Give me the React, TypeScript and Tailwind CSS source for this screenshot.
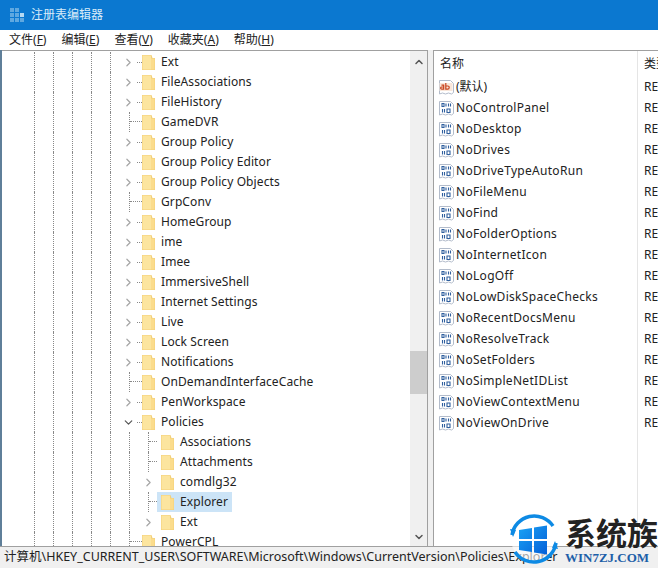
import { ChevronRight, ChevronDown, ChevronUp } from "lucide-react";

const menus = [
    { label: "文件", key: "F" },
    { label: "编辑", key: "E" },
    { label: "查看", key: "V" },
    { label: "收藏夹", key: "A" },
    { label: "帮助", key: "H" },
];

// kind: c = collapsed, o = open, n = no children
const tree = [
    { name: "Ext", kind: "c", level: 0 },
    { name: "FileAssociations", kind: "c", level: 0 },
    { name: "FileHistory", kind: "c", level: 0 },
    { name: "GameDVR", kind: "n", level: 0 },
    { name: "Group Policy", kind: "c", level: 0 },
    { name: "Group Policy Editor", kind: "c", level: 0 },
    { name: "Group Policy Objects", kind: "c", level: 0 },
    { name: "GrpConv", kind: "n", level: 0 },
    { name: "HomeGroup", kind: "c", level: 0 },
    { name: "ime", kind: "c", level: 0 },
    { name: "Imee", kind: "c", level: 0 },
    { name: "ImmersiveShell", kind: "c", level: 0 },
    { name: "Internet Settings", kind: "c", level: 0 },
    { name: "Live", kind: "c", level: 0 },
    { name: "Lock Screen", kind: "c", level: 0 },
    { name: "Notifications", kind: "c", level: 0 },
    { name: "OnDemandInterfaceCache", kind: "n", level: 0 },
    { name: "PenWorkspace", kind: "c", level: 0 },
    { name: "Policies", kind: "o", level: 0 },
    { name: "Associations", kind: "n", level: 1 },
    { name: "Attachments", kind: "n", level: 1 },
    { name: "comdlg32", kind: "c", level: 1 },
    { name: "Explorer", kind: "n", level: 1, selected: true },
    { name: "Ext", kind: "c", level: 1 },
    { name: "PowerCPL", kind: "n", level: 0 },
];

const values = [
    "NoControlPanel",
    "NoDesktop",
    "NoDrives",
    "NoDriveTypeAutoRun",
    "NoFileMenu",
    "NoFind",
    "NoFolderOptions",
    "NoInternetIcon",
    "NoLogOff",
    "NoLowDiskSpaceChecks",
    "NoRecentDocsMenu",
    "NoResolveTrack",
    "NoSetFolders",
    "NoSimpleNetIDList",
    "NoViewContextMenu",
    "NoViewOnDrive",
];

function Folder() {
    return (
        <svg width="13" height="16" viewBox="0 0 13 16" className="shrink-0">
            <path d="M0 1h9.5l1 3H13v12H0z" fill="#f3cf78" />
            <path d="M0.5 1.5h8.5v14H0.5z" fill="#fce59f" />
            <path d="M9 4.5h3.5v11H9z" fill="#fbdc8c" />
        </svg>
    );
}

function RegIcon({ text }: { text: boolean }) {
    return (
        <svg width="15" height="16" viewBox="0 0 15 16" className="shrink-0">
            <path d="M0.5 1.5h11l3 3v9l-2 1.5-3-1-3 1-3-1-3 1z" fill="#fff" stroke="#b3bccb" />
            {text ? (
                <>
                    <rect x="0.5" y="4" width="13" height="8" fill="#f8e6da" />
                    <path d="M2.5 6.2h2.2v4h-2q-1 0-1-1.1t1-1.1h2M6.8 4v6.2h2q1.4 0 1.4-1.6t-1.4-1.6h-2" fill="none" stroke="#c8421c" strokeWidth="1.2" />
                </>
            ) : (
                <>
                    <path d="M3 3.5h2v3h-2zM7 3.5v3M9.5 3.5v3M11.5 3.5v3" fill="none" stroke="#2f5f9e" strokeWidth="1.1" />
                    <path d="M3.5 9v3.5M5.5 9v3.5M8 9h3v3.5h-3z" fill="none" stroke="#2f5f9e" strokeWidth="1.1" />
                </>
            )}
        </svg>
    );
}

function Logo() {
    return (
        <svg width="50" height="50" viewBox="0 0 50 50" className="shrink-0">
            <defs>
                <linearGradient id="tile" x1="0" y1="0" x2="1" y2="1">
                    <stop offset="0" stopColor="#1aa3f5" />
                    <stop offset="1" stopColor="#0560d8" />
                </linearGradient>
            </defs>
            <circle cx="25" cy="25" r="23" fill="#fff" fillOpacity="0.6" />
            <path d="M3 21A22.500 22.500 0 0 1 44 12" fill="none" stroke="#0d8ae4" strokeWidth="3.5" />
            <path d="M47 29A22.500 22.500 0 0 1 6 38" fill="none" stroke="#0d8ae4" strokeWidth="3.5" />
            <path d="M1 15l6 1-3 7zM49 35l-6-1 3-7z" fill="#0d8ae4" />
            <path d="M10 16l13-2v11h-13zM25 13.500l13-2v13.500h-13zM10 27h13v11l-13-2zM25 27h13v13.500l-13-2z" fill="url(#tile)" />
        </svg>
    );
}

export default function App() {
    return (
        <div className="relative flex h-[568px] w-[658px] flex-col overflow-hidden bg-white font-['Noto_Sans','Noto_Sans_CJK_SC',sans-serif] text-[12px] text-[#222]">
            {/* Title bar */}
            <div className="flex h-[30px] shrink-0 items-center gap-[7px] bg-[#0b78d0] pl-[10px] text-white">
                <div className="grid grid-cols-3 gap-px">
                    <span className="h-1 w-1 bg-[#5fa8e0]" />
                    <span className="h-1 w-1 bg-[#5fa8e0]" />
                    <span className="h-1 w-1 bg-[#0b78d0]" />
                    <span className="h-1 w-1 bg-[#5fa8e0]" />
                    <span className="h-1 w-1 bg-[#5fa8e0]" />
                    <span className="h-1 w-1 bg-[#b5d9f3]" />
                    <span className="h-1 w-1 bg-[#5fa8e0]" />
                    <span className="h-1 w-1 bg-[#5fa8e0]" />
                    <span className="h-1 w-1 bg-[#5fa8e0]" />
                </div>
                <span className="text-[12px] text-[#d9ecf9]">注册表编辑器</span>
            </div>

            {/* Menu */}
            <div className="flex h-[20px] shrink-0 items-center bg-white pl-[9px] text-[12px]">
                {menus.map((m) => (
                    <span key={m.key} className="mr-[15px] whitespace-nowrap">
                        {m.label}(<span className="underline">{m.key}</span>)
                    </span>
                ))}
            </div>

            {/* Panels */}
            <div className="flex min-h-0 flex-1 border-l-2 border-[#5f7f99] bg-[#f0f0f0]">
                <div className="flex w-[426px] shrink-0 border-t border-r border-[#a0a0a0] bg-white">
                    <div className="min-w-0 flex-1 overflow-hidden pt-px">
                        {tree.map((row, i) => (
                            <div key={i} className="flex h-5 items-center">
                                {/* dotted guide lines */}
                                <div className="flex h-full w-[120px] shrink-0 pl-[32px]">
                                    {[0, 1, 2, 3, 4].map((g) => (
                                        <span key={g} className="h-full w-[19px] shrink-0 border-l border-dotted border-[#888]" />
                                    ))}
                                </div>
                                <div className="flex h-full w-5 shrink-0 items-center text-[#a6a6a6]">
                                    {row.kind === "c" && row.level === 0 && (
                                        <>
                                            <ChevronRight size={13} strokeWidth={2.2} />
                                            <span className="ml-[2px] w-[5px] border-t border-dotted border-[#888]" />
                                        </>
                                    )}
                                    {row.kind === "o" && (
                                        <>
                                            <ChevronDown size={13} strokeWidth={2.2} className="text-[#555]" />
                                            <span className="ml-[2px] w-[5px] border-t border-dotted border-[#888]" />
                                        </>
                                    )}
                                    {row.kind === "n" && row.level === 0 && (
                                        <span className="ml-[7px] h-full w-[13px] shrink-0 border-l border-dotted border-[#888] pt-[9px]">
                                            <span className="block border-t border-dotted border-[#888]" />
                                        </span>
                                    )}
                                    {row.level === 1 && <span className="ml-[7px] h-full border-l border-dotted border-[#888]" />}
                                </div>
                                {row.level === 1 && (
                                    <div className="flex h-full w-[15px] shrink-0 items-center text-[#a6a6a6]">
                                        {row.kind === "c" ? (
                                            <ChevronRight size={13} strokeWidth={2.2} />
                                        ) : (
                                            <span className="ml-[6px] h-full w-[9px] border-l border-dotted border-[#888] pt-[9px]">
                                                <span className="block border-t border-dotted border-[#888]" />
                                            </span>
                                        )}
                                    </div>
                                )}
                                <div className={`flex h-full items-center gap-[6px] pr-[4px] ${row.level === 1 ? "pl-[4px]" : ""} ${row.selected ? "bg-[#cce4f7]" : ""}`}>
                                    <Folder />
                                    <span className="whitespace-nowrap tracking-[0.1px]">{row.name}</span>
                                </div>
                            </div>
                        ))}
                    </div>
                    {/* Tree scrollbar */}
                    <div className="flex w-[17px] shrink-0 flex-col items-center bg-[#f0f0f0] text-[#555]">
                        <ChevronUp size={12} strokeWidth={3} className="mt-[5px]" />
                        <div className="mb-[137px] mt-auto h-[43px] w-full bg-[#cdcdcd]" />
                        <ChevronDown size={12} strokeWidth={3} className="mb-[3px]" />
                    </div>
                </div>

                {/* Value list */}
                <div className="ml-[5px] min-w-0 flex-1 border-l border-t border-[#a0a0a0] bg-white">
                    <div className="flex h-[25px] items-center">
                        <span className="w-[203px] shrink-0 pl-[6px] text-[12px]">名称</span>
                        <span className="h-full whitespace-nowrap border-l border-[#e5e5e5] pl-[6px] pt-[4px] text-[12px]">类型</span>
                    </div>
                    <div className="relative">
                        <div className="absolute bottom-[-99px] left-[203px] top-0 border-l border-[#e5e5e5]" />
                        <div className="flex h-[21px] items-center pl-[5px]">
                            <RegIcon text />
                            <span className="w-[183px] shrink-0 pl-[2px]">(默认)</span>
                            <span className="pl-[7px]">RE</span>
                        </div>
                        {values.map((v) => (
                            <div key={v} className="flex h-[21px] items-center pl-[5px]">
                                <RegIcon text={false} />
                                <span className="w-[183px] shrink-0 whitespace-nowrap pl-[2px] tracking-[0.3px]">{v}</span>
                                <span className="pl-[7px]">RE</span>
                            </div>
                        ))}
                    </div>
                </div>
            </div>

            {/* Status bar */}
            <div className="flex h-[22px] shrink-0 items-center whitespace-nowrap border-t border-[#a0a0a0] bg-[#f0f0f0] pl-[4px] text-[12.5px]">
                计算机\HKEY_CURRENT_USER\SOFTWARE\Microsoft\Windows\CurrentVersion\Policies\Explorer
            </div>

            {/* Watermark */}
            <div className="absolute left-[509px] top-[514px] flex w-[149px] items-start">
                <Logo />
                <div className="ml-[6px] flex flex-col">
                    <span className="whitespace-nowrap text-[31px] font-bold leading-[38px] text-[#222]">系统族</span>
                    <span className="whitespace-nowrap font-['Liberation_Serif',serif] text-[13px] font-bold leading-[12px] text-[#1d5fa8]">WIN7ZJ.COM</span>
                </div>
            </div>
        </div>
    );
}
